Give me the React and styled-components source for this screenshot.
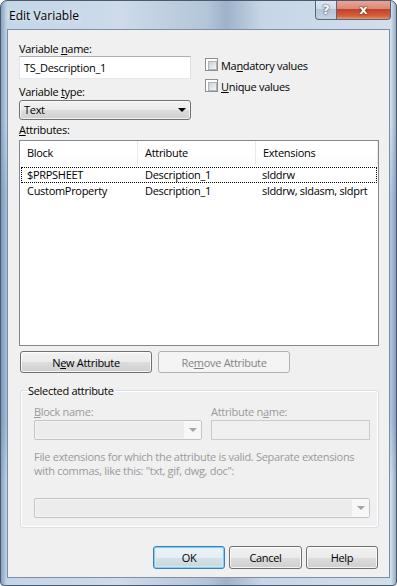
import React from 'react'
import styled, { createGlobalStyle, css } from 'styled-components'

const GlobalStyle = createGlobalStyle`
  html, body { margin: 0; padding: 0; background: #fff; }
  body {
    font-family: "Open Sans", "Noto Sans", sans-serif;
    font-size: 11px;
    letter-spacing: -0.3px;
    color: #000;
  }
  * { box-sizing: border-box; }
`

// Window frame (Aero glass)
const Window = styled.div`
  width: 397px;
  height: 586px;
  display: flex;
  flex-direction: column;
  border: 1px solid #4b5a6c;
  border-radius: 7px 7px 4px 4px;
  background:
    linear-gradient(to right, rgba(90,120,160,0.55) 0, rgba(255,255,255,0) 6px, rgba(255,255,255,0) 390px, rgba(90,120,160,0.5) 100%),
    linear-gradient(#0000 0, #0000 120px, rgba(110,145,190,0.35) 200px, rgba(110,145,190,0.35) 420px, #0000 480px),
    linear-gradient(to right, #c3d5e8 0%, #cddbea 30%, #b3c5d9 52%, #9db2c9 57%, #c6d6e7 66%, #d2dfec 100%);
  overflow: hidden;
`

const TitleBar = styled.div`
  height: 28px;
  display: flex;
  align-items: flex-start;
  padding-left: 8px;
`

const Title = styled.div`
  font-size: 12px;
  letter-spacing: 0;
  line-height: 14px;
  margin-top: 8px;
  color: #000;
  text-shadow: 0 0 6px rgba(255,255,255,0.9);
`

const Captions = styled.div`
  margin-left: auto;
  margin-right: 5px;
  display: flex;
  margin-top: -1px;
`

const CaptionButton = styled.div`
  height: 20px;
  width: ${p => (p.$close ? '54px' : '22px')};
  display: flex;
  align-items: center;
  justify-content: center;
  border: 1px solid #5a6676;
  border-top: none;
  font-family: "DejaVu Sans", sans-serif;
  font-weight: bold;
  letter-spacing: 0;
  ${p => p.$close
    ? css`
      border-radius: 0 0 4px 0;
      border-left: none;
      background: linear-gradient(#e9a99b 0%, #dc8a78 45%, #c4402c 50%, #d4613c 85%, #e69a72 100%);
      color: #fff;
      font-size: 13px;
      text-shadow: 0 0 2px #5a1408, 0 0 1px #5a1408;
    `
    : css`
      border-radius: 0 0 0 4px;
      background: linear-gradient(#dfe8f1 0%, #cfdbe8 45%, #b4c4d6 50%, #c5d3e2 100%);
      color: #fff;
      font-size: 13px;
      text-shadow: 0 0 2px #3a4656, 0 0 1px #3a4656;
    `}
`

const Client = styled.div`
  flex: 1;
  margin: 0 6px 7px 6px;
  border: 1px solid #7d8ea3;
  background: #f0f0f0;
  padding: 11px 10px 0 11px;
  display: flex;
  flex-direction: column;
`

const TopRow = styled.div`
  display: flex;
  gap: 14px;
`

const LeftCol = styled.div`
  width: 172px;
  display: flex;
  flex-direction: column;
`

const RightCol = styled.div`
  padding-top: 17px;
  display: flex;
  flex-direction: column;
  gap: 8px;
`

const Label = styled.div`
  line-height: 15px;
  height: 15px;
  margin-top: ${p => p.$mt || 0}px;
  color: ${p => (p.$disabled ? '#9a9a9a' : '#000')};
  white-space: nowrap;
`

const Key = styled.span`
  text-decoration: underline;
`

const TextBox = styled.div`
  height: ${p => p.$h || 23}px;
  margin-top: ${p => p.$mt || 0}px;
  border: 1px solid;
  border-color: #abadb3 #dbdfe6 #e3e9ef #e2e3ea;
  background: ${p => (p.$disabled ? '#f0f0f0' : '#fff')};
  padding: 0 4px;
  line-height: 21px;
  ${p => p.$disabled && css`border-color: #c9cbcf;`}
`

const Combo = styled.div`
  height: 20px;
  width: ${p => (p.$w ? `${p.$w}px` : 'auto')};
  margin-top: ${p => p.$mt || 0}px;
  border: 1px solid #707070;
  border-radius: 3px;
  background: linear-gradient(#f2f2f2 0%, #ebebeb 50%, #dddddd 51%, #cfcfcf 100%);
  box-shadow: inset 0 0 0 1px rgba(255,255,255,0.7);
  display: flex;
  align-items: center;
  padding-left: 4px;
  ${p => p.$disabled && css`
    border-color: #c2c4c7;
    border-radius: 2px;
    background: #ececec;
    box-shadow: inset 0 0 0 1px #f4f4f4;
    padding-left: 0;
  `}
`

const ComboText = styled.div`
  flex: 1;
  line-height: 18px;
`

const ComboButton = styled.div`
  width: 17px;
  align-self: stretch;
  display: flex;
  align-items: center;
  justify-content: center;
  ${p => p.$disabled && css`background: #f7f7f7;`}
  &::after {
    content: '';
    border-left: 4px solid transparent;
    border-right: 4px solid transparent;
    border-top: 4px solid ${p => (p.$disabled ? '#a6a6a6' : '#000')};
  }
`

const CheckRow = styled.div`
  display: flex;
  align-items: center;
  gap: 3px;
  height: 13px;
`

const CheckBox = styled.div`
  width: 13px;
  height: 13px;
  border: 1px solid #8e8f8f;
  background: #fff;
  padding: 2px;
  &::before {
    content: '';
    display: block;
    width: 100%;
    height: 100%;
    border: 1px solid #aeb3b9;
    background: linear-gradient(135deg, #cbcfd5 0%, #f6f6f6 100%);
  }
`

const CheckLabel = styled.span`
  line-height: 15px;
  margin-top: 1px;
`

const ListView = styled.div`
  height: 206px;
  margin-top: 3px;
  border: 1px solid #828790;
  background: #fff;
`

const ListGrid = styled.div`
  display: grid;
  grid-template-columns: 118px 118px 1fr;
`

const Header = styled(ListGrid)`
  height: 24px;
  background: linear-gradient(#ffffff 0%, #ffffff 60%, #f7f8f9 100%);
`

const HeaderCell = styled.div`
  padding-left: 7px;
  line-height: 24px;
  border-right: 1px solid #e7eaee;
`

const Rows = styled.div`
  padding-top: 2px;
`

const Row = styled(ListGrid)`
  margin: 0 1px;
  height: 16px;
  border: 1px dotted ${p => (p.$focused ? '#000' : 'transparent')};
  grid-template-columns: 116px 118px 1fr;
`

const Cell = styled.div`
  padding-left: 5px;
  line-height: 14px;
  white-space: nowrap;
  &:not(:first-child) { padding-left: 7px; }
  &:last-child { padding-left: 6px; }
`

const ButtonRow = styled.div`
  display: flex;
  gap: ${p => p.$gap || 6}px;
  margin-top: ${p => p.$mt || 0}px;
  padding: 0 ${p => p.$pr || 0}px 0 ${p => p.$pl || 0}px;
  justify-content: ${p => (p.$end ? 'flex-end' : 'flex-start')};
`

const Button = styled.div`
  width: ${p => p.$w}px;
  height: ${p => p.$h || 22}px;
  border: 1px solid #707070;
  border-radius: 3px;
  background: linear-gradient(#f2f2f2 0%, #ebebeb 50%, #dddddd 51%, #cfcfcf 100%);
  box-shadow: inset 0 0 0 1px rgba(255,255,255,0.75);
  display: flex;
  align-items: center;
  justify-content: center;
  white-space: nowrap;
  ${p => p.$default && css`
    border-color: #3c7fb1;
    box-shadow: inset 0 0 0 1px #7fd0f4, inset 0 0 0 2px rgba(210,240,252,0.7);
    background: linear-gradient(#eef4f8 0%, #e6eef3 50%, #d6e0e7 51%, #c9d5de 100%);
  `}
  ${p => p.$disabled && css`
    border-color: #adb2b5;
    background: #f4f4f4;
    box-shadow: none;
    color: #838383;
  `}
`

const Group = styled.fieldset`
  margin: 10px 0 0 1px;
  padding: 6px 8px 9px 13px;
  border: 1px solid #d5dfe5;
  border-radius: 3px;
  box-shadow: inset 0 0 0 1px #fff;
  min-width: 0;
`

const Legend = styled.legend`
  padding: 0 2px 0 1px;
  margin-left: -7px;
  line-height: 15px;
`

const GroupGrid = styled.div`
  display: grid;
  grid-template-columns: 168px 159px;
  column-gap: 9px;
`

const Field = styled.div`
  display: flex;
  flex-direction: column;
`

const HelpText = styled.div`
  margin-top: 10px;
  line-height: 14px;
  color: #9a9a9a;
  white-space: nowrap;
`

const rows = [
  { block: '$PRPSHEET', attr: 'Description_1', ext: 'slddrw', focused: true },
  { block: 'CustomProperty', attr: 'Description_1', ext: 'slddrw, sldasm, sldprt' },
]

export default function App() {
  return (
    <>
      <GlobalStyle />
      <Window>
        <TitleBar>
          <Title>Edit Variable</Title>
          <Captions>
            <CaptionButton>?</CaptionButton>
            <CaptionButton $close>x</CaptionButton>
          </Captions>
        </TitleBar>
        <Client>
          <TopRow>
            <LeftCol>
              <Label>Variable <Key>n</Key>ame:</Label>
              <TextBox>TS_Description_1</TextBox>
              <Label $mt={5}>Variable <Key>t</Key>ype:</Label>
              <Combo $mt={1}>
                <ComboText>Text</ComboText>
                <ComboButton />
              </Combo>
            </LeftCol>
            <RightCol>
              <CheckRow>
                <CheckBox />
                <CheckLabel>Ma<Key>n</Key>datory values</CheckLabel>
              </CheckRow>
              <CheckRow>
                <CheckBox />
                <CheckLabel><Key>U</Key>nique values</CheckLabel>
              </CheckRow>
            </RightCol>
          </TopRow>
          <Label $mt={2}><Key>A</Key>ttributes:</Label>
          <ListView>
            <Header>
              <HeaderCell>Block</HeaderCell>
              <HeaderCell>Attribute</HeaderCell>
              <HeaderCell>Extensions</HeaderCell>
            </Header>
            <Rows>
              {rows.map((r, i) => (
                <Row key={i} $focused={r.focused}>
                  <Cell>{r.block}</Cell>
                  <Cell>{r.attr}</Cell>
                  <Cell>{r.ext}</Cell>
                </Row>
              ))}
            </Rows>
          </ListView>
          <ButtonRow $mt={5} $pl={1}>
            <Button $w={132}>N<Key>e</Key>w Attribute</Button>
            <Button $w={132} $disabled>Re<Key>m</Key>ove Attribute</Button>
          </ButtonRow>
          <Group>
            <Legend>Selected attribute</Legend>
            <GroupGrid>
              <Field>
                <Label $disabled><Key>B</Key>lock name:</Label>
                <Combo $mt={1} $disabled>
                  <ComboText />
                  <ComboButton $disabled />
                </Combo>
              </Field>
              <Field>
                <Label $disabled>Attribute n<Key>a</Key>me:</Label>
                <TextBox $mt={1} $h={20} $disabled />
              </Field>
            </GroupGrid>
            <HelpText>
              File extensions for which the attribute is valid. Separate extensions<br />
              with commas, like this: "txt, gif, dwg, doc":
            </HelpText>
            <Combo $mt={20} $w={336} $disabled>
              <ComboText />
              <ComboButton $disabled />
            </Combo>
          </Group>
          <ButtonRow $mt={18} $gap={4} $pr={1} $end>
            <Button $w={72} $h={23} $default>OK</Button>
            <Button $w={73} $h={23}>Cancel</Button>
            <Button $w={72} $h={23}>Help</Button>
          </ButtonRow>
        </Client>
      </Window>
    </>
  )
}
